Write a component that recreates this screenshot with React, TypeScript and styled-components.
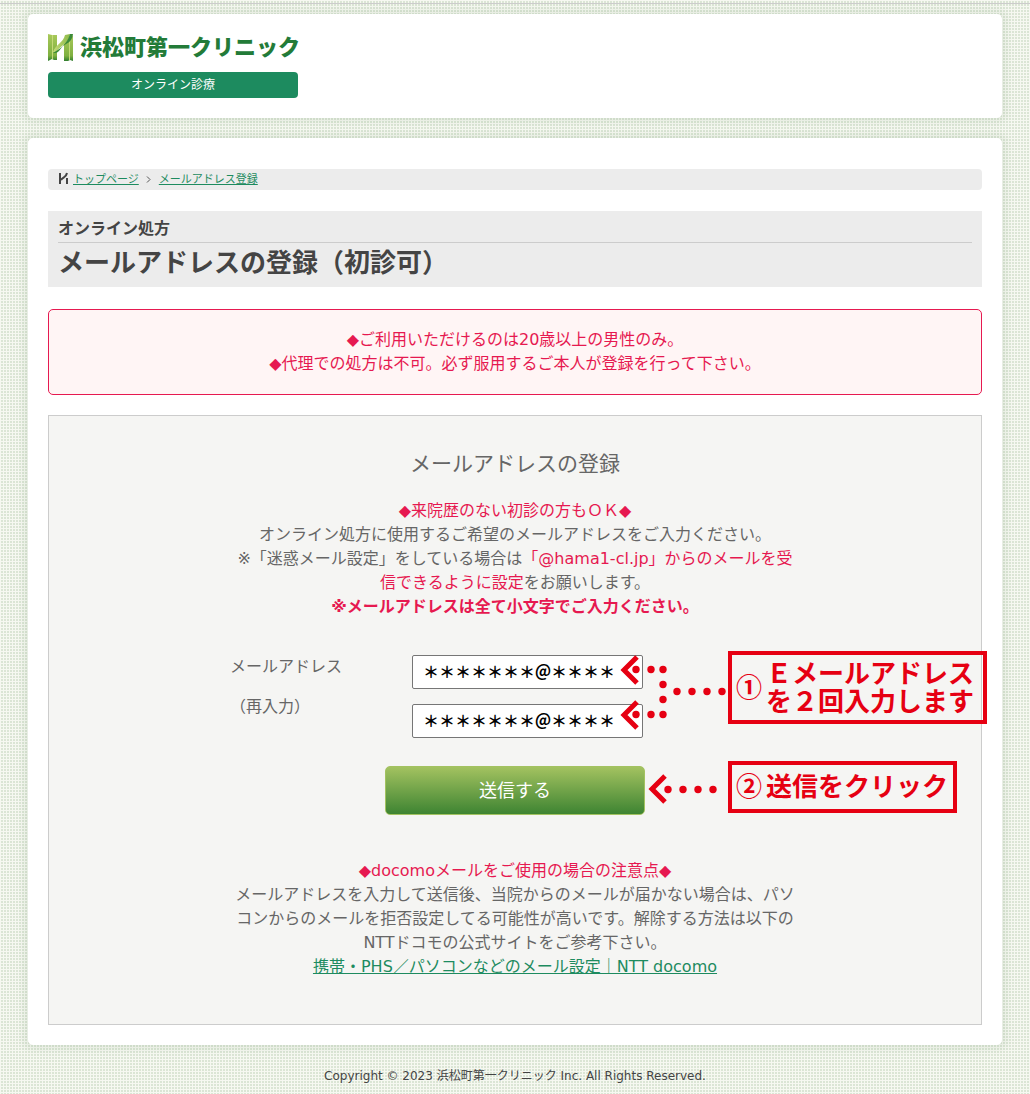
import React from "react";
import styled, { createGlobalStyle } from "styled-components";

const colors = {
  text: "#666666",
  dark: "#444444",
  green: "#1d8b5f",
  pink: "#e61950",
  red: "#e60012",
};

const GlobalStyle = createGlobalStyle`
  *, *::before, *::after { box-sizing: border-box; }
  body {
    margin: 0;
    color: ${colors.text};
    font: 16px/24px "DejaVu Sans", "Noto Sans CJK JP", sans-serif;
    text-spacing-trim: space-all;
    background-color: #f6f8f1;
    background-image: linear-gradient(#f6f8f1 1px, transparent 1px),
      linear-gradient(90deg, #f6f8f1 1px, #dbe5d5 1px);
    background-size: 3px 3px;
  }
  h1, h2, p { margin: 0; }
`;

const Page = styled.div`
  display: flex;
  flex-direction: column;
  gap: 20px;
  margin-top: 3px;
  padding: 10px 28px 6px;
  border-top: 1px solid #cccccc;
`;

const Card = styled.div<{ $pad: string }>`
  padding: ${(p) => p.$pad};
  background: #ffffff;
  border-radius: 5px;
  box-shadow: 0 0 6px 5px rgba(60, 120, 60, 0.08);
`;

const Brand = styled.a`
  display: flex;
  align-items: center;
  gap: 6px;
  width: 250px;
  height: 28px;
  color: #237b38;
  font-size: 22px;
  font-weight: 900;
  line-height: 28px;
  text-decoration: none;
  white-space: nowrap;
`;

const LogoMark = styled.svg`
  flex: none;
`;

const Badge = styled.div`
  width: 250px;
  margin-top: 10px;
  border-radius: 4px;
  background: ${colors.green};
  color: #ffffff;
  font-size: 12px;
  line-height: 26px;
  text-align: center;
`;

const Breadcrumb = styled.nav`
  display: flex;
  align-items: center;
  height: 21px;
  padding: 0 10px;
  border-radius: 4px;
  background: #ececec;
  font-size: 11px;
  line-height: 21px;
`;

const Link = styled.a`
  color: ${colors.green};
  text-decoration: underline;
`;

const CrumbLink = styled(Link)`
  margin-left: 4px;
`;

const Chevron = styled.svg`
  margin: 0 4px 0 7px;
`;

const TitleBlock = styled.header`
  margin-top: 21px;
  padding: 6px 10px 3px;
  background: #ececec;
  color: ${colors.dark};
  font-weight: 700;
`;

const Category = styled.p`
  padding-bottom: 1px;
  border-bottom: 1px solid #cccccc;
`;

const Title = styled.h1`
  font-size: 26px;
  line-height: 41px;
`;

const Notice = styled.div`
  margin-top: 22px;
  padding: 18px 20px;
  border: 1px solid ${colors.pink};
  border-radius: 5px;
  background: #fff5f5;
  color: ${colors.pink};
  text-align: center;
`;

const FormPanel = styled.form`
  display: flex;
  flex-direction: column;
  align-items: center;
  margin-top: 20px;
  padding: 32px 20px 45px;
  border: 1px solid #cccccc;
  background: #f5f5f3;
`;

const FormTitle = styled.h2`
  font-size: 21px;
  font-weight: 400;
  line-height: 32px;
`;

const Copy = styled.div<{ $top: number }>`
  width: 560px;
  max-width: 100%;
  margin-top: ${(p) => p.$top}px;
  text-align: center;
`;

const Accent = styled.span`
  color: ${colors.pink};
`;

const Fields = styled.div`
  position: relative;
  display: grid;
  grid-template-columns: 182px 231px;
  width: 570px;
  margin-top: 36px;
`;

const Labels = styled.div`
  display: flex;
  flex-direction: column;
  gap: 16px;
`;

const Inputs = styled.div`
  display: flex;
  flex-direction: column;
  gap: 15px;
`;

const Field = styled.input`
  width: 100%;
  height: 34px;
  padding: 0 10px 2px;
  border: 1px solid #767676;
  border-radius: 2px;
  background: #ffffff;
  color: #000000;
  font: 700 16px/24px "Noto Sans CJK JP", sans-serif;
`;

const Actions = styled.div`
  position: relative;
  margin-top: 28px;
`;

const Submit = styled.button`
  display: block;
  width: 260px;
  height: 49px;
  padding: 0 0 4px;
  border: 1px solid #a3c260;
  border-radius: 5px;
  background: linear-gradient(#a3c260, #3e8432);
  color: #ffffff;
  font: 400 18px/24px "Noto Sans CJK JP", sans-serif;
`;

const Callout = styled.div<{ $left: number; $top: number }>`
  position: absolute;
  left: ${(p) => p.$left}px;
  top: ${(p) => p.$top}px;
  display: flex;
  color: ${colors.red};
  pointer-events: none;
`;

const CalloutBox = styled.div<{ $height: number; $right: number }>`
  display: flex;
  align-items: center;
  gap: 4px;
  height: ${(p) => p.$height}px;
  padding: 0 ${(p) => p.$right}px 4px 4px;
  border: 4px solid ${colors.red};
  font: 700 26px/28px "Noto Sans CJK JP", sans-serif;
  white-space: nowrap;
`;

const StepNumber = styled.span`
  width: 26px;
`;

const Footer = styled.footer`
  color: #444444;
  font-size: 12px;
  line-height: 22px;
  text-align: center;
`;

function Logo() {
  return (
    <LogoMark width="26" height="28" viewBox="0 0 26 28" aria-hidden="true">
      <defs>
        <linearGradient id="bar" x1="0" y1="0" x2="0" y2="1">
          <stop offset="0" stopColor="#a9c95a" />
          <stop offset="0.8" stopColor="#7fb040" />
          <stop offset="1" stopColor="#2f7d2f" />
        </linearGradient>
        <linearGradient id="bar-light" x1="0" y1="0" x2="1" y2="0">
          <stop offset="0" stopColor="#c5da7a" />
          <stop offset="1" stopColor="#8dba48" />
        </linearGradient>
      </defs>
      <path d="M0 0l4 1h5v25H6l-2-1-4 2z" fill="url(#bar)" />
      <path d="M4 1h1v24H4z" fill="#c5da7a" />
      <path d="M16 10l6-4 3-5v26l-3-1-2 1h-4z" fill="url(#bar)" />
      <path d="M21 7h1v19h-1z" fill="#c5da7a" />
      <path d="M5 18C8 10 15 9 17 1l5-1C21 10 13 11 9 17l-1 2z" fill="url(#bar-light)" />
      <path d="M22 0h3c-1 9-7 9-11 13-2 2-3 5-6 6H5c6-4 14-8 17-19z" fill="#3c8a38" />
    </LogoMark>
  );
}

function CrumbMark() {
  return (
    <svg width="11" height="16" viewBox="0 0 11 16" aria-hidden="true">
      <path d="M2 1v11M9 6v6M3 8C5 5 8 6 9 1" fill="none" stroke="#444444" strokeWidth="2" />
    </svg>
  );
}

type Point = [number, number];

function DottedArrow({
  width,
  height,
  tips,
  dots,
}: {
  width: number;
  height: number;
  tips: Point[];
  dots: Point[];
}) {
  return (
    <svg
      width={width}
      height={height}
      viewBox={`0 0 ${width} ${height}`}
      overflow="visible"
      aria-hidden="true"
    >
      {tips.map(([x, y]) => (
        <path
          key={y}
          d={`M${x + 13} ${y - 13}L${x} ${y}L${x + 13} ${y + 13}`}
          fill="none"
          stroke={colors.red}
          strokeWidth="5"
        />
      ))}
      {dots.map(([x, y]) => (
        <circle key={`${x}-${y}`} cx={x} cy={y} r="3.7" fill={colors.red} />
      ))}
    </svg>
  );
}

const emailDots: Point[] = [
  [16, 18.5], [31, 18.5], [43, 18.5], [43, 33.5], [43, 48.5], [43, 63.5],
  [31, 63.5], [16, 63.5], [57, 40.5], [72, 40.5], [87, 40.5], [102, 40.5],
];
const submitDots: Point[] = [[20, 28.5], [35, 28.5], [50, 28.5], [65, 28.5]];

export default function App() {
  return (
    <>
      <GlobalStyle />
      <Page>
        <Card as="header" $pad="20px">
          <Brand href="#">
            <Logo />
            浜松町第一クリニック
          </Brand>
          <Badge>オンライン診療</Badge>
        </Card>

        <Card as="main" $pad="31px 20px 20px">
          <Breadcrumb aria-label="breadcrumb">
            <CrumbMark />
            <CrumbLink href="#">トップページ</CrumbLink>
            <Chevron width="5" height="7" viewBox="0 0 5 7" aria-hidden="true">
              <path d="M1 0.5L4 3.5L1 6.5" fill="none" stroke="#555555" />
            </Chevron>
            <CrumbLink href="#">メールアドレス登録</CrumbLink>
          </Breadcrumb>

          <TitleBlock>
            <Category>オンライン処方</Category>
            <Title>メールアドレスの登録（初診可）</Title>
          </TitleBlock>

          <Notice>
            <p>◆ご利用いただけるのは20歳以上の男性のみ。</p>
            <p>◆代理での処方は不可。必ず服用するご本人が登録を行って下さい。</p>
          </Notice>

          <FormPanel onSubmit={(e) => e.preventDefault()}>
            <FormTitle>メールアドレスの登録</FormTitle>
            <Copy $top={19}>
              <Accent>◆来院歴のない初診の方もＯＫ◆</Accent>
              <br />
              オンライン処方に使用するご希望のメールアドレスをご入力ください。
              <br />
              ※「迷惑メール設定」をしている場合は
              <Accent>「@hama1-cl.jp」からのメールを受信できるように設定</Accent>
              をお願いします。
              <br />
              <Accent as="strong">※メールアドレスは全て小文字でご入力ください。</Accent>
            </Copy>

            <Fields>
              <Labels>
                <label htmlFor="email">メールアドレス</label>
                <label htmlFor="email-again">（再入力）</label>
              </Labels>
              <Inputs>
                <Field id="email" defaultValue="＊＊＊＊＊＊＊＠＊＊＊＊" />
                <Field id="email-again" defaultValue="＊＊＊＊＊＊＊＠＊＊＊＊" />
              </Inputs>
              <Callout $left={390} $top={-4}>
                <DottedArrow width={108} height={73} tips={[[4, 19], [4, 64]]} dots={emailDots} />
                <CalloutBox $height={73} $right={9}>
                  <StepNumber>①</StepNumber>
                  <span>
                    Ｅメールアドレス
                    <br />
                    を２回入力します
                  </span>
                </CalloutBox>
              </Callout>
            </Fields>

            <Actions>
              <Submit type="submit">送信する</Submit>
              <Callout $left={263} $top={-5}>
                <DottedArrow width={80} height={52} tips={[[4, 28]]} dots={submitDots} />
                <CalloutBox $height={52} $right={5}>
                  <StepNumber>②</StepNumber>
                  <span>送信をクリック</span>
                </CalloutBox>
              </Callout>
            </Actions>

            <Copy $top={44}>
              <Accent>◆docomoメールをご使用の場合の注意点◆</Accent>
              <br />
              メールアドレスを入力して送信後、当院からのメールが届かない場合は、パソコンからのメールを拒否設定してる可能性が高いです。解除する方法は以下のNTTドコモの公式サイトをご参考下さい。
              <br />
              <Link href="#">携帯・PHS／パソコンなどのメール設定｜NTT docomo</Link>
            </Copy>
          </FormPanel>
        </Card>

        <Footer>Copyright © 2023 浜松町第一クリニック Inc. All Rights Reserved.</Footer>
      </Page>
    </>
  );
}
